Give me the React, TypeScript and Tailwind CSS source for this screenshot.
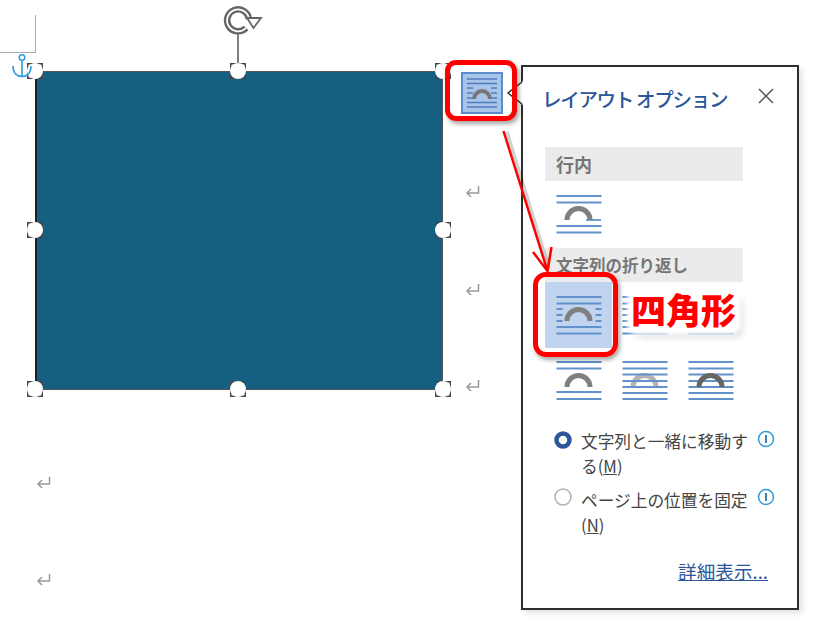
const HANDLES = [
  "left-[27px] top-[63px]",
  "left-[230px] top-[63px]",
  "left-[435px] top-[63px]",
  "left-[27px] top-[222px]",
  "left-[435px] top-[222px]",
  "left-[27px] top-[381px]",
  "left-[230px] top-[381px]",
  "left-[435px] top-[381px]",
];

const RETURNS = [
  "left-[465px] top-[185px]",
  "left-[465px] top-[283px]",
  "left-[465px] top-[379px]",
  "left-[36px] top-[476px]",
  "left-[36px] top-[573px]",
];

function Handle({ className }: { className: string }) {
  return (
    <svg className={`absolute ${className}`} width="16" height="16" viewBox="0 0 16 16">
      <rect x="0.750" y="0.750" width="14.500" height="14.500" fill="none" stroke="#444" strokeWidth="1.500" />
      <circle cx="8" cy="8" r="8" fill="#fff" />
    </svg>
  );
}

function ReturnMark({ className }: { className: string }) {
  return (
    <svg className={`absolute ${className}`} width="15" height="13" viewBox="0 0 15 13">
      <path d="M13.500 1v7H2M6 4 2 8l4 4" fill="none" stroke="#9a9a9a" strokeWidth="1.500" />
    </svg>
  );
}

type WrapIcon = {
  lines: number[];
  dashes?: number[];
  shortLine?: number;
  arcY: number;
  arcColor?: string;
  arcOnTop?: boolean;
};

function LayoutGlyph({ lines, dashes = [], shortLine, arcY, arcColor = "#808080", arcOnTop = true }: WrapIcon) {
  const arc = <path d={`M11 ${arcY}a11.500 11.500 0 0 1 23 0`} fill="none" stroke={arcColor} strokeWidth="5" />;
  return (
    <svg width="46" height="40" viewBox="0 0 46 40" className="block shrink-0">
      {!arcOnTop && arc}
      {lines.map((y) => (
        <path key={y} d={`M0.500 ${y}h45`} stroke="#6192cc" strokeWidth="1.800" />
      ))}
      {dashes.map((y) => (
        <path key={y} d={`M0.500 ${y}h6M39.500 ${y}h6`} stroke="#6192cc" strokeWidth="1.800" />
      ))}
      {shortLine !== undefined && <path d={`M30 ${shortLine}h15`} stroke="#6192cc" strokeWidth="1.800" />}
      {arcOnTop && arc}
    </svg>
  );
}

const SQUARE_GLYPH: WrapIcon = { lines: [1, 7.5, 31, 37.5], dashes: [13, 19, 25], arcY: 25 };

function InfoIcon() {
  return (
    <svg width="18" height="18" viewBox="0 0 18 18" className="block">
      <circle cx="9" cy="9" r="7.500" fill="none" stroke="#2e9bd9" strokeWidth="1.500" />
      <path d="M9 5v8" stroke="#2b6fb5" strokeWidth="1.800" />
    </svg>
  );
}

function SectionBar({ label, className }: { label: string; className: string }) {
  return (
    <div className={`flex h-[34px] w-[198px] items-center bg-[#ebebeb] pl-[11px] font-bold text-[#767676] ${className}`}>
      {label}
    </div>
  );
}

function OptionRow({
  selected,
  infoClass,
  className,
  children,
}: {
  selected: boolean;
  infoClass: string;
  className?: string;
  children: React.ReactNode;
}) {
  return (
    <div className={`flex text-[16.700px] leading-[24.500px] text-[#444] ${className ?? ""}`}>
      <div className={`ml-[9px] w-[27px] shrink-0 ${selected ? "pt-[2px]" : ""}`}>
        <svg width="18" height="18" viewBox="0 0 18 18" className="block">
          {selected ? (
            <circle cx="9" cy="9" r="6.500" fill="#fff" stroke="#2b579a" strokeWidth="4.500" />
          ) : (
            <circle cx="9" cy="9" r="8" fill="#fff" stroke="#b0b0b0" strokeWidth="1.500" />
          )}
        </svg>
      </div>
      <div className="w-[176px] shrink-0 whitespace-nowrap">{children}</div>
      <div className={infoClass}>
        <InfoIcon />
      </div>
    </div>
  );
}

function OptionsPanel() {
  return (
    <div className="absolute left-[521px] top-[65px] flex h-[545px] w-[278px] flex-col border-2 border-[#2e2e2e] bg-white pl-[22px] shadow-[3px_3px_6px_rgba(0,0,0,0.12)]">
      <div className="flex h-[80px] w-[230px] items-start justify-between pt-[17px]">
        <div className="-ml-[3px] text-[19.500px] leading-[30px] font-medium tracking-[-1.300px] whitespace-nowrap text-[#2b579a]">
          レイアウト オプション
        </div>
        <svg className="mt-[3px]" width="18" height="18" viewBox="0 0 18 18">
          <path d="M2 2l14 14M16 2 2 16" stroke="#555" strokeWidth="1.500" />
        </svg>
      </div>
      <SectionBar label="行内" className="text-[18px]" />
      <div className="h-[67px] pl-[11px] pt-[14px]">
        <LayoutGlyph lines={[1, 7.5, 31, 37.5]} shortLine={25} arcY={25} />
      </div>
      <SectionBar label="文字列の折り返し" className="text-[16.500px]" />
      <div className="flex h-[66px] gap-[20px]">
        <div className="h-[66px] w-[67px] shrink-0 -mr-[10px] bg-[#c0d4f0] pl-[11px] pt-[14px]">
          <LayoutGlyph {...SQUARE_GLYPH} />
        </div>
        <div className="pt-[14px]">
          <LayoutGlyph {...SQUARE_GLYPH} />
        </div>
        <div className="pt-[14px]">
          <LayoutGlyph {...SQUARE_GLYPH} />
        </div>
      </div>
      <div className="flex gap-[20px] pl-[11px] pt-[13px]">
        <LayoutGlyph lines={[1, 7.5, 31, 38]} arcY={26} />
        <LayoutGlyph lines={[1, 7.5, 13.5, 20, 26, 32, 38]} arcY={26} arcColor="#b4b4b4" arcOnTop={false} />
        <LayoutGlyph lines={[1, 7.5, 13.5, 20, 26, 32, 38]} arcY={26} arcColor="#666" />
      </div>
      <OptionRow selected infoClass="pt-px" className="mt-[28px]">
        文字列と一緒に移動す
        <br />
        る(<span className="underline">M</span>)
      </OptionRow>
      <OptionRow selected={false} infoClass="" className="mt-[10px]">
        ページ上の位置を固定
        <br />
        (<span className="underline">N</span>)
      </OptionRow>
      <div className="mt-[22px] w-[223px] text-right text-[18.600px] leading-[24px] text-[#2b579a] underline">
        詳細表示...
      </div>
    </div>
  );
}

export default function App() {
  return (
    <div className="relative h-[636px] w-[826px] overflow-hidden bg-white font-['Noto_Sans_CJK_JP','Liberation_Sans',sans-serif]">
      {/* page margin mark */}
      <div className="absolute left-0 top-[15px] h-[38px] w-[36px] border-r border-b border-[#aaa]" />

      {/* shape */}
      <div className="absolute left-[35px] top-[71px] h-[319px] w-[408px] border border-l-2 border-[#555] border-l-[#222] bg-[#156082]" />

      {/* rotate handle */}
      <div className="absolute left-[237px] top-[34px] h-[30px] w-[2px] bg-[#808080]" />
      <svg className="absolute left-[222px] top-[4px]" width="42" height="34" viewBox="0 0 42 34">
        <path d="M27 15A11 11 0 1 0 24 24" fill="none" stroke="#666" strokeWidth="6.500" />
        <path d="M27 15A11 11 0 1 0 24 24" fill="none" stroke="#fff" strokeWidth="1.800" />
        <path d="M25 14h14l-7.500 10z" fill="#fff" stroke="#666" strokeWidth="1.800" />
      </svg>

      {HANDLES.map((h) => (
        <Handle key={h} className={h} />
      ))}
      {RETURNS.map((r) => (
        <ReturnMark key={r} className={r} />
      ))}

      {/* anchor */}
      <svg className="absolute left-[11px] top-[53px]" width="22" height="26" viewBox="0 0 22 26">
        <circle cx="11" cy="4.500" r="2.800" fill="none" stroke="#2e9bd9" strokeWidth="1.500" />
        <path d="M11 7.500V24M2 13c0 7 4 10.500 9 10.500S20 20 20 13" fill="none" stroke="#2e9bd9" strokeWidth="1.600" />
      </svg>

      <OptionsPanel />

      {/* panel callout pointer, breaks the panel's left border */}
      <svg className="absolute left-[505px] top-[80px]" width="20" height="26" viewBox="0 0 20 26">
        <path d="M18 1 3 13l15 12z" fill="#fff" />
        <path d="M17 2 3 13l14 11" fill="none" stroke="#333" strokeWidth="1.500" />
      </svg>

      {/* layout options button */}
      <div className="absolute left-[461px] top-[72px] h-[42px] w-[42px] border-2 border-[#5b8bc9] bg-[#a9c4e9]">
        <svg width="38" height="38" viewBox="0 0 38 38" className="block">
          <path d="M4 5h30M4 9.500h30M4 28.500h30M4 33h30M4 14h6M28 14h6M4 19h6M28 19h6M4 24h6M28 24h6" stroke="#4f7cc0" strokeWidth="1.300" />
          <path d="M11 25a8 8 0 0 1 16 0" fill="none" stroke="#777" strokeWidth="4" />
        </svg>
      </div>

      {/* annotation: red highlight boxes */}
      <div className="absolute left-[445px] top-[60px] h-[61px] w-[72px] rounded-[11px] border-[5px] border-[#f00] shadow-[2px_3px_4px_rgba(0,0,0,0.35)]" />
      <div className="absolute left-[533px] top-[272px] h-[85px] w-[85px] rounded-[13px] border-[5px] border-[#f00] shadow-[2px_3px_4px_rgba(0,0,0,0.35)]" />

      {/* annotation: arrow */}
      <svg className="absolute left-[495px] top-[125px]" width="70" height="150" viewBox="0 0 70 150">
        <path d="M12 7 54 143" stroke="#000" strokeOpacity="0.18" strokeWidth="3.500" />
        <path d="M8.500 6 52.500 146M38 127l14.500 19 4-24" fill="none" stroke="#f00" strokeWidth="2.500" />
      </svg>

      {/* annotation: label on a white glow */}
      <div className="absolute left-[631px] top-[292px] flex h-[39px] w-[106px] items-center rounded-md bg-white pb-[5px] text-[35px] leading-[34px] font-black whitespace-nowrap text-[#f00] shadow-[0_0_4px_4px_#fff,5px_6px_7px_rgba(0,0,0,0.16)]">
        四角形
      </div>
    </div>
  );
}
